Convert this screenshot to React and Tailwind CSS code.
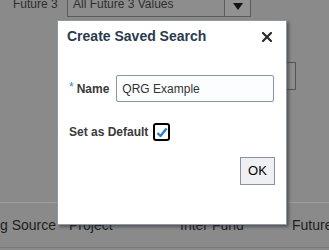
export default function App() {
  return (
    <div
      className="relative w-[329px] h-[250px] overflow-hidden bg-[#8a8a8a]"
      style={{ fontFamily: '"Liberation Sans", Arial, sans-serif' }}
    >
      {/* background page */}
      <div className="flex items-center mt-[-10px] pl-[13px] h-[27px]">
        <span className="text-[12px] text-[#2e2e2e] w-[54px] shrink-0">Future 3</span>
        <div className="flex h-[27px] w-[184px] shrink-0 border border-[#5c5c5c] bg-[#8d8d8d]">
          <div className="flex-1 flex items-center pl-[5px] text-[12px] text-[#2e2e2e]">All Future 3 Values</div>
          <div className="w-[26px] border-l border-[#5c5c5c] bg-[#929292] flex items-start justify-center pt-[12px]">
            <svg width="10" height="8" viewBox="0 0 10 8"><path d="M0 0 L10 0 L5 7 Z" fill="#111" /></svg>
          </div>
        </div>
      </div>
      <div className="flex justify-end pr-[33px] mt-[45px]">
        <div className="w-[40px] h-[28px] border border-[#555] bg-[#8e8e8e]" />
      </div>
      <div className="mt-[112px] border-t border-[#9e9e9e]" />
      <div className="flex items-center h-[16px] mt-[14px] text-[14px] text-[#1e1e1e] whitespace-nowrap">
        <div className="w-[56px] shrink-0 flex justify-end overflow-hidden"><span>Funding Source</span></div>
        <span className="ml-[13px] w-[111px] shrink-0">Project</span>
        <span className="w-[112px] shrink-0">Inter Fund</span>
        <span className="shrink-0">Future 4</span>
      </div>
      <div className="mt-[14px] border-t border-[#7a7a7a]" />

      {/* dialog */}
      <div className="absolute left-[57px] top-[20px] w-[230px] h-[205px] bg-white border border-[#8e9aa8] shadow-[2px_2px_3px_rgba(40,40,40,0.55)]">
        <div className="flex items-center justify-between h-[31px] pl-[9px] pr-[14px]">
          <span className="text-[14px] font-bold text-[#2a3a4e]">Create Saved Search</span>
          <svg width="10" height="10" viewBox="0 0 10 10">
            <path d="M1 1 L9 9 M9 1 L1 9" stroke="#2b2b2b" strokeWidth="2.2" strokeLinecap="square" />
          </svg>
        </div>
        <div className="flex items-center mt-[23px] pl-[11px]">
          <span className="text-[12px] text-[#3b7fc4] self-start mt-[3px] mr-[2px]">*</span>
          <span className="text-[12px] font-bold text-[#3a3a3a] ml-[1px]">Name</span>
          <div className="ml-[7px] w-[158px] h-[27px] border border-[#8c949c] rounded-[2px] bg-[#fcfdfe] flex items-center pl-[5px] text-[12px] text-[#333]">
            QRG Example
          </div>
        </div>
        <div className="flex items-center mt-[21px] pl-[11px]">
          <span className="text-[12px] font-bold text-[#3a3a3a]">Set as Default</span>
          <div className="ml-[5px] w-[17px] h-[18px] border-2 border-black rounded-[3px] flex items-center justify-center">
            <svg width="12" height="11" viewBox="0 0 12 11">
              <path d="M1.5 6 L4.5 9 L10.5 1.5" stroke="#2f7fc8" strokeWidth="2.4" fill="none" strokeLinejoin="round" />
            </svg>
          </div>
        </div>
        <div className="flex justify-end pr-[11px] mt-[16px]">
          <div className="w-[35px] h-[28px] border border-[#8a939c] bg-[#eff0f3] flex items-center justify-center text-[13px] text-black">
            OK
          </div>
        </div>
      </div>
    </div>
  );
}
